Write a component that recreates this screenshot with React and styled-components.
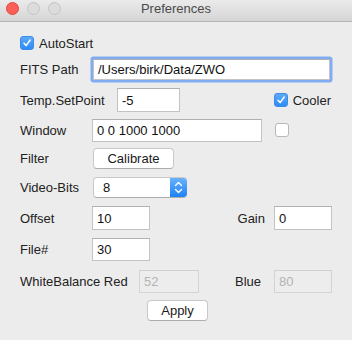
import React from "react";
import styled, { createGlobalStyle } from "styled-components";

const Global = createGlobalStyle`
  html, body { margin: 0; padding: 0; background: #ececec; }
  body { font-family: "Liberation Sans", Arial, sans-serif; }
`;

const Window = styled.div`
  width: 352px;
  height: 340px;
  display: flex;
  flex-direction: column;
  background: #ececec;
  overflow: hidden;
`;

const TitleBar = styled.div`
  height: 21px;
  display: flex;
  align-items: center;
  position: relative;
  background: linear-gradient(#ebebeb, #d5d5d5);
  border-bottom: 1px solid #b6b6b6;
`;

const Lights = styled.div`
  display: flex;
  gap: 8px;
  padding-left: 6px;
  margin-top: -5px;
`;

const Light = styled.span`
  width: 11px;
  height: 11px;
  border-radius: 50%;
  background: ${(p) => (p.$red ? "#fc5f57" : "#dcdcdc")};
  border: 0.5px solid ${(p) => (p.$red ? "#e2463f" : "#c4c4c4")};
`;

const Title = styled.div`
  position: absolute;
  left: 0;
  right: 0;
  top: 1px;
  text-align: center;
  font-size: 13px;
  color: #4a4a4a;
`;

const Body = styled.div`
  display: flex;
  flex-direction: column;
  padding: 0 20px 0 20px;
`;

const Row = styled.div`
  display: flex;
  align-items: center;
  height: ${(p) => p.$h}px;
  margin-top: ${(p) => p.$mt}px;
`;

const Label = styled.span`
  font-size: 13px;
  color: #222;
  width: ${(p) => (p.$w ? `${p.$w}px` : "auto")};
  margin-right: ${(p) => p.$mr || 0}px;
  white-space: nowrap;
  flex-shrink: 0;
`;

const Field = styled.div`
  box-sizing: border-box;
  width: ${(p) => p.$w}px;
  height: ${(p) => p.$h || 24}px;
  display: flex;
  align-items: center;
  padding-left: 4px;
  font-size: 13px;
  color: ${(p) => (p.$disabled ? "#b4b4b4" : "#111")};
  background: ${(p) => (p.$disabled ? "#ededed" : "#fff")};
  border: 1px solid ${(p) => (p.$disabled ? "#d4d4d4" : "#c3c3c3")};
  border-top-color: ${(p) => (p.$disabled ? "#d0d0d0" : "#b0b0b0")};
  box-shadow: ${(p) => (p.$focus ? "0 0 0 2.5px #80adf1" : "none")};
  border-radius: ${(p) => (p.$focus ? "1px" : "0")};
`;

const Box = styled.span`
  box-sizing: border-box;
  width: 14px;
  height: 14px;
  border-radius: 3px;
  display: inline-flex;
  align-items: center;
  justify-content: center;
  flex-shrink: 0;
  background: ${(p) => (p.$on ? "linear-gradient(#5eaaf8, #2d8bf5)" : "#fff")};
  border: 1px solid ${(p) => (p.$on ? "#3a8ce8" : "#b8b8b8")};
`;

const CheckWrap = styled.div`
  display: flex;
  align-items: center;
  gap: 5px;
  margin-left: ${(p) => (p.$auto ? "auto" : `${p.$ml || 0}px`)};
  margin-right: ${(p) => p.$mr || 0}px;
`;

const Button = styled.div`
  box-sizing: border-box;
  width: ${(p) => p.$w}px;
  height: 21px;
  display: flex;
  align-items: center;
  justify-content: center;
  font-size: 13px;
  color: #1a1a1a;
  background: #fff;
  border: 1px solid #c8c8c8;
  border-bottom-color: #adadad;
  border-radius: 4px;
  margin-left: ${(p) => p.$ml || 0}px;
`;

const Select = styled.div`
  box-sizing: border-box;
  width: 94px;
  height: 21px;
  display: flex;
  align-items: center;
  margin-left: 1px;
  background: #fff;
  border: 1px solid #c8c8c8;
  border-bottom-color: #adadad;
  border-right: none;
  border-radius: 4px;
  font-size: 13px;
  color: #111;
  overflow: hidden;
`;

const SelectText = styled.span`
  flex: 1;
  padding-left: 9px;
`;

const Stepper = styled.span`
  width: 17px;
  height: 21px;
  margin-top: -1px;
  margin-bottom: -1px;
  display: flex;
  align-items: center;
  justify-content: center;
  background: linear-gradient(#6db4fb, #1a7ff7);
  border-radius: 0 4px 4px 0;
`;

const Group = styled.div`
  display: flex;
  align-items: center;
  margin-left: auto;
`;

const Center = styled.div`
  display: flex;
  justify-content: center;
  height: 22px;
  margin-top: 6px;
  align-items: center;
`;

function Check({ on }) {
  return (
    <Box $on={on}>
      {on && (
        <svg width="10" height="10" viewBox="0 0 10 10">
          <path d="M2 5.3 L4.1 7.6 L8.2 2" stroke="#fff" strokeWidth="1.5" fill="none" strokeLinecap="round" strokeLinejoin="round" />
        </svg>
      )}
    </Box>
  );
}

export default function App() {
  return (
    <>
      <Global />
      <Window>
        <TitleBar>
          <Lights>
            <Light $red />
            <Light />
            <Light />
          </Lights>
          <Title>Preferences</Title>
        </TitleBar>
        <Body>
          <Row $h={18} $mt={12}>
            <CheckWrap>
              <Check on />
              <Label>AutoStart</Label>
            </CheckWrap>
          </Row>
          <Row $h={26} $mt={4}>
            <Label $w={73}>FITS Path</Label>
            <Field $w={237} $h={21} $focus>/Users/birk/Data/ZWO</Field>
          </Row>
          <Row $h={24} $mt={6}>
            <Label $w={97}>Temp.SetPoint</Label>
            <Field $w={63}>-5</Field>
            <CheckWrap $auto $mr={1}>
              <Check on />
              <Label>Cooler</Label>
            </CheckWrap>
          </Row>
          <Row $h={24} $mt={6}>
            <Label $w={72}>Window</Label>
            <Field $w={170} $h={23}>0 0 1000 1000</Field>
            <CheckWrap $ml={13}>
              <Check />
            </CheckWrap>
          </Row>
          <Row $h={22} $mt={5}>
            <Label $w={73}>Filter</Label>
            <Button $w={81}>Calibrate</Button>
          </Row>
          <Row $h={22} $mt={7}>
            <Label $w={72}>Video-Bits</Label>
            <Select>
              <SelectText>8</SelectText>
              <Stepper>
                <svg width="9" height="13" viewBox="0 0 9 13">
                  <path d="M1.5 4.5 L4.5 1.5 L7.5 4.5 M1.5 8.5 L4.5 11.5 L7.5 8.5" stroke="#fff" strokeWidth="1.4" fill="none" strokeLinecap="round" strokeLinejoin="round" />
                </svg>
              </Stepper>
            </Select>
          </Row>
          <Row $h={24} $mt={8}>
            <Label $w={72}>Offset</Label>
            <Field $w={58}>10</Field>
            <Group>
              <Label $mr={9}>Gain</Label>
              <Field $w={58}>0</Field>
            </Group>
          </Row>
          <Row $h={24} $mt={7}>
            <Label $w={72}>File#</Label>
            <Field $w={58} $h={23}>30</Field>
          </Row>
          <Row $h={24} $mt={8}>
            <Label $w={119}>WhiteBalance Red</Label>
            <Field $w={60} $h={23} $disabled>52</Field>
            <Group>
              <Label $mr={13}>Blue</Label>
              <Field $w={58} $h={23} $disabled>80</Field>
            </Group>
          </Row>
          <Center>
            <Button $w={61} $ml={3}>Apply</Button>
          </Center>
        </Body>
      </Window>
    </>
  );
}
